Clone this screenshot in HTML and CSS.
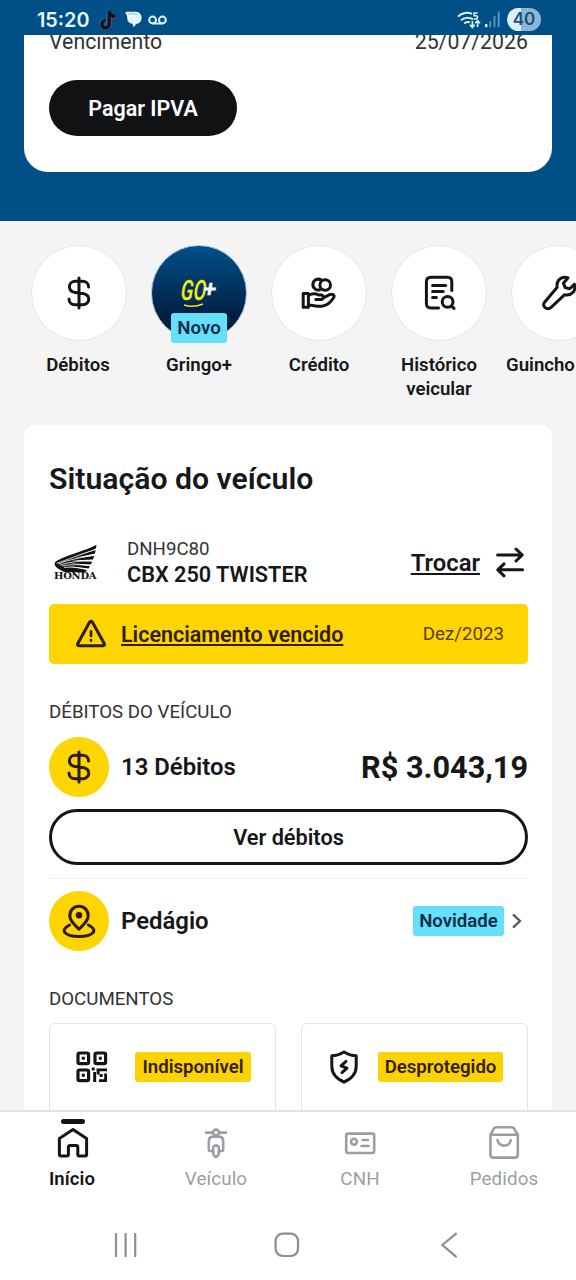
FILE: index.html
```html
<!DOCTYPE html>
<html lang="pt-BR">
<head>
<meta charset="utf-8">
<title>Gringo</title>
<link rel="stylesheet" href="styles.css">
</head>
<body>
<svg class="defs" width="0" height="0">
  <symbol id="dollar" viewBox="0 0 24 34"><path d="M21.6 11C21.6 7.4 19 5.2 15.6 5.2H8.2C5 5.2 2.4 7.6 2.4 10.8C2.4 14 5 16 8.2 16.6L15.8 17.6C19.2 18.2 21.8 20.2 21.8 23.2C21.8 26.4 19 28.8 15.8 28.8H8C4.6 28.8 2 26.6 2 23M12 2V32"/></symbol>
</svg>
<div class="phone">
  <header class="status">
    <div class="status-left">
      <span class="clock">15:20</span>
      <svg class="tiktok" width="18" height="20" viewBox="0 0 18 20"><g fill="none" stroke-width="3.4"><path stroke="#1fb3bd" opacity=".6" d="M9.2 1V13.5A3.6 3.6 0 1 1 5.6 9.8M9.2 1C9.6 4.5 12 6.6 15.6 6.8"/><path stroke="#d62f56" opacity=".7" d="M11 1.6V14.3A3.7 3.7 0 1 1 7 10.4M11 1.6C11.6 5 13.6 7 17 7.2"/><path stroke="#10131f" d="M10.2 1V14A3.7 3.7 0 1 1 6.4 10.2M10.2 1C10.8 4.5 12.8 6.4 16.4 6.6"/></g></svg>
      <svg class="chat" width="17" height="17" viewBox="0 0 17 17"><path fill="#e4f8ff" d="M2 .8H11C14.6 1 16.6 3.6 16.6 7C16.6 10.4 14.4 12.6 11.4 12.8L8.6 16.2L7.4 12.8C4.2 12.4 2.2 10.4 2.2 7C2.2 5 1.6 3.6.4 2.6C.2 1.4 1 .8 2 .8Z"/><path d="M3.4 3.6C6 2.4 9 2.6 11.6 3.4" stroke="#8ab9d8" fill="none"/></svg>
      <svg class="voicemail" width="19" height="10" viewBox="0 0 19 10"><g fill="none" stroke="#dff5ff" stroke-width="2"><circle cx="4.6" cy="5" r="3.4"/><circle cx="14.4" cy="5" r="3.4"/><path d="M4.6 8.5H14.4"/></g></svg>
    </div>
    <div class="status-right">
      <svg class="wifi" width="24" height="18" viewBox="0 0 24 18"><g fill="none" stroke="#d9f3fb" stroke-width="2"><path d="M1 5.6C5 1.6 11 1 15 2.8M4 9.4C7 6.4 12 6 16 8.4M7.2 12.6C9.2 10.8 11 10.6 13 11.4"/><path d="M20.6 2H17.2V4.8H19C21 4.8 21 8 18.8 8H16.8" stroke-width="1.6"/><path d="M15.4 10V16M13 13.8L15.4 16.4L17.6 13.8M20.6 16V10M18.2 12.2L20.6 9.8L23 12.2" stroke-width="1.7"/></g></svg>
      <svg class="signal" width="15" height="17" viewBox="0 0 15 17"><path fill="#d4efff" d="M0 13h2.4v3.2H0z"/><path fill="#5f99c3" d="M4.4 10h1.8v6.2H4.4zM8.6 5h1.8v11.2H8.6zM12.8.6h1.8v15.6h-1.8z"/></svg>
      <span class="battery">40</span>
    </div>
  </header>

  <section class="hero">
    <div class="hero-card">
      <div class="due"><span>Vencimento</span><span>25/07/2026</span></div>
      <button class="pay">Pagar IPVA</button>
    </div>
  </section>

  <nav class="shortcuts">
    <div class="shortcut"><div class="disc"><svg class="line" width="24" height="34"><use href="#dollar"/></svg></div><span class="name deb">Débitos</span></div>
    <div class="shortcut"><div class="disc plus"><div class="go"><i>GO</i><b>+</b><svg width="24" height="6" viewBox="0 0 24 6"><path d="M2 3Q11 6 21 2" fill="none" stroke="#f4e51c" stroke-width="1.5"/></svg></div><span class="new">Novo</span></div><span class="name gri">Gringo+</span></div>
    <div class="shortcut"><div class="disc"><svg class="line" width="36" height="36" viewBox="0 0 36 36"><circle cx="24.2" cy="10" r="5.3"/><path d="M19.2 14.6A5.4 5.4 0 1 1 20.3 5.1"/><path d="M2.2 18.4H7.4V32.2H2.2ZM7.6 20.6C11 18.4 14.4 18.4 17.6 20H20.2C23 20 23 24.4 20 24.6H14.8M22.2 22.8L28.6 19.6C31.8 18.4 34.2 20.4 32.4 23C30 26.8 26.6 30 22 31C17.8 32 13.2 30.4 7.6 30"/></svg></div><span class="name cre">Crédito</span></div>
    <div class="shortcut"><div class="disc"><svg class="line report" width="34" height="36" viewBox="0 0 34 36"><path d="M15.6 33H8C4.8 33 3.4 31.6 3.4 28.6V6.8C3.4 3.6 4.8 2.2 8 2.2H24.4C27.4 2.2 28.8 3.6 28.8 6.8V15.4M9.6 10.4H22.8M9.6 16.4H20.2M9.6 22.4H13.4"/><circle cx="24.6" cy="26.8" r="5.4"/><path d="M28.6 31L31 33.4"/></svg></div><span class="name his">Histórico<br>veicular</span></div>
    <div class="shortcut"><div class="disc"><svg class="line" width="36" height="36" viewBox="0 0 36 36"><path d="M16.2 12.2C14.8 5.4 20.6 .6 27 2.8L22.4 8.2L24.2 12.6L28.8 13.8L33.4 9.2C35.6 15.8 30.2 21.4 23.4 19.8L9.6 32.8C5.4 35.6 .8 31 3.6 27.2Z"/></svg></div><span class="name gui">Guincho</span></div>
  </nav>

  <main class="panel">
    <h1>Situação do veículo</h1>
    <div class="vehicle">
      <div class="honda">
        <svg width="43" height="29" viewBox="0 0 43 29"><path fill="#111" d="M42.5.8C35 5 24 8 11.5 12.8C4.5 15.6.6 17.6.6 20C.8 23 5 25.4 11 28.2H31L33 26L14 22L34.5 24.6L36 22.2L15 19.2L36.6 20.6L38.4 17.8L17 16.4L39 15.6L40.2 12L20 14L41 9.6L41.6 6L23 11.4C30 8.4 37 7.6 42 4.2Z"/><g fill="none" stroke="#fff" stroke-width=".8"><path d="M2.6 19.4C12 16 28 10 41.6 5.4M4.4 20C14 15.6 27 14 40.6 10.8M6 21C15 17.8 27 17 38.8 16.4M8 22C18 19.8 27 21 36.6 21.4M10 23.4C18 22.4 27 24.2 34.4 25.4"/></g></svg>
        <span>HONDA</span>
      </div>
      <div class="model"><span class="plate">DNH9C80</span><strong>CBX 250 TWISTER</strong></div>
      <a class="swap">Trocar</a>
      <svg class="line arrows" width="30" height="32" viewBox="0 0 30 32"><path d="M2.6 9H27M21 3L27.2 9L21 15M27.6 23.8H2.8M9 17.8L2.8 23.8L9 29.8"/></svg>
    </div>
    <div class="alert">
      <svg class="line" width="32" height="30" viewBox="0 0 32 30"><path d="M14.4 3.4Q16 1 17.6 3.4L29.2 24.4Q30.2 26.6 27.8 26.8H4.2Q1.8 26.6 2.8 24.4Z"/><path d="M16 12.4V17M16 21V21.6" stroke-width="2.7"/></svg>
      <a>Licenciamento vencido</a><span>Dez/2023</span>
    </div>
    <h2 class="cap-debts">DÉBITOS DO VEÍCULO</h2>
    <div class="row">
      <span class="dot"><svg class="line" width="24" height="34"><use href="#dollar"/></svg></span>
      <strong class="count">13 Débitos</strong><strong class="total">R$ 3.043,19</strong>
    </div>
    <button class="see"><span>Ver débitos</span></button>
    <div class="row toll">
      <span class="dot"><svg class="line" width="36" height="36" viewBox="0 0 36 36"><path d="M18 26.2C13.4 21.4 8.8 18 8.8 12.4A9.2 9.2 0 0 1 27.2 12.4C27.2 18 22.6 21.4 18 26.2ZM8.6 22C-2.4 27.4 4.6 33.6 18 33.6C31.4 33.6 38.4 27.4 27.4 22"/><circle cx="18" cy="12.2" r="1.8" fill="#2c1d10"/></svg></span>
      <strong class="toll-name">Pedágio</strong>
      <span class="tag blue">Novidade</span>
      <svg class="chev" width="12" height="18" viewBox="0 0 12 18"><path d="M2 2.4L9 9L2 15.6"/></svg>
    </div>
    <h2 class="cap-docs">DOCUMENTOS</h2>
    <div class="docs">
      <div class="doc">
        <svg class="line" width="32" height="32" viewBox="0 0 32 32"><g stroke-width="3.2"><rect x="2" y="2" width="10.6" height="10.6" rx="1.6"/><rect x="19" y="2" width="10.6" height="10.6" rx="1.6"/><rect x="2" y="19" width="10.6" height="10.6" rx="1.6"/></g><path stroke="none" fill="#111" d="M5.8 5.8h3v3h-3zM22.8 5.8h3v3h-3zM5.8 22.8h3v3h-3zM15.8 16.6h2.8v3h-2.8zM17.2 21h3v10h-3zM20.4 17.4H31v2.8h-7.4v3.4h-2.6zM23.6 23h3v3h-3zM28.2 22.6H31V31h-8v-2.8h5.2z"/></svg>
        <span class="tag yellow ind">Indisponível</span>
      </div>
      <div class="doc">
        <svg class="line shield" width="32" height="36" viewBox="0 0 32 36"><path d="M16 3C12 5.4 8 6.8 3.8 6.8V17C3.8 24.6 8.4 29.8 16 33C23.6 29.8 28.2 24.6 28.2 17V6.8C24 6.8 20 5.4 16 3Z"/><path d="M18 12.4L13 16.8L19 19.2L14 23.6"/></svg>
        <span class="tag yellow des">Desprotegido</span>
      </div>
    </div>
  </main>

  <footer class="bottom">
    <div class="tabs">
      <div class="tab on"><i class="mark"></i><svg width="34" height="32" viewBox="0 0 34 32"><path d="M17 2.4L30.6 11.4V27.6Q30.6 29 29.2 29H23.2Q21.8 29 21.8 27.6V20.4Q21.8 18.6 20 18.6H14.4Q12.4 18.6 12.4 20.4V27.6Q12.4 29 11 29H4.8Q3.4 29 3.4 27.6V11.4Z"/></svg><span class="ini">Início</span></div>
      <div class="tab"><svg width="24" height="32" viewBox="0 0 24 32"><circle cx="12" cy="5.6" r="3"/><path d="M2 5.6H8.8M15.2 5.6H22M7.4 24H6Q4.8 24 4.8 22.6V14.4Q4.8 9.6 9 9.6H15Q19.2 9.6 19.2 14.4V22.6Q19.2 24 18 24H16.6"/><path d="M9.2 20Q12 16.8 14.8 20V27Q12 32.8 9.2 27Z"/></svg><span class="vei">Veículo</span></div>
      <div class="tab"><svg width="32" height="32" viewBox="0 0 32 32"><rect x="2.2" y="6.6" width="28" height="19.4" rx="2"/><circle cx="10" cy="14.8" r="3"/><path d="M18.6 13H24M17.6 19H24.6"/></svg><span class="cnh">CNH</span></div>
      <div class="tab"><svg width="34" height="36" viewBox="0 0 34 36"><path d="M3.4 9.8L7 3.4Q7.6 2.2 9 2.2H25Q26.4 2.2 27 3.4L30.8 9.8V29.4Q30.8 32.6 27.6 32.6H6.6Q3.4 32.6 3.4 29.4ZM3.4 9.8H30.8M10.4 15.2C12.4 22.4 22 22.4 23.8 15.2"/></svg><span class="ped">Pedidos</span></div>
    </div>
    <div class="system">
      <svg width="24" height="24" viewBox="0 0 24 24"><path d="M2 1V23M11.6 1V23M21.2 1V23"/></svg>
      <svg width="26" height="26" viewBox="0 0 26 26"><rect x="1.6" y="1.6" width="22.4" height="22.4" rx="7.2"/></svg>
      <svg width="18" height="26" viewBox="0 0 18 26"><path d="M16 1.6L2.4 13L16 24.6"/></svg>
    </div>
  </footer>
</div>
</body>
</html>
```
FILE: styles.css
```css
* { box-sizing: border-box; }
body { margin: 0; font-family: Roboto, "Liberation Sans", sans-serif; color: #161719; background: #f4f4f4; }
.phone { width: 576px; height: 1280px; display: flex; flex-direction: column; overflow: hidden; }
.defs { position: absolute; }
svg { display: block; flex: none; }
button { font: inherit; display: block; border: 0; }
.line { fill: none; stroke: #151515; stroke-width: 3; stroke-linecap: round; stroke-linejoin: round; }

.status { flex: none; height: 35px; padding: 4px 35px 0 37px; background: #004f87; display: flex; justify-content: space-between; }
.status-left, .status-right { display: flex; align-items: center; height: 31px; }
.clock { width: 62px; font: 600 19.8px Inter, sans-serif; color: #e4f8ff; }
.chat { margin-left: 8px; }
.voicemail { margin-left: 6px; }
.signal { margin-left: 4px; }
.battery { margin-left: 7px; width: 34px; height: 23px; border-radius: 12px; background: linear-gradient(90deg, #daf1fc 40%, #8ab7d7 40%); color: #174f7c; font: 600 17px/23px Inter, sans-serif; text-align: center; }

.hero { flex: none; height: 186px; background: #004f87; padding: 0 24px; overflow: hidden; }
.hero-card { height: 137px; padding: 0 24px 0 25px; background: #fff; border-radius: 0 0 24px 24px; overflow: hidden; }
.due { display: flex; justify-content: space-between; height: 45px; font-size: 21.3px; line-height: 24px; color: #333; }
.due span { margin-top: -5px; }
.pay { width: 188px; height: 56px; border-radius: 28px; background: #111214; color: #fff; font-size: 21.5px; font-weight: 600; padding: 0; }

.shortcuts { flex: none; display: flex; height: 204px; margin-left: 19px; padding-top: 24px; }
.shortcut { flex: none; width: 120px; display: flex; flex-direction: column; align-items: center; text-align: center; }
.disc { flex: none; width: 96px; height: 96px; border: 1.5px solid #e6e6e6; border-radius: 50%; background: #fff; display: flex; align-items: center; justify-content: center; position: relative; }
.report { margin-left: 2px; }
.plus { background: linear-gradient(#00508b, #001f40 75%); border-color: #a7c6dc; }
.go { display: flex; position: relative; left: 0; top: -2px; line-height: 30px; }
.go i { font: italic 600 28px/30px Roboto, sans-serif; color: #f4e51c; transform: scaleX(.68) skewX(-6deg); transform-origin: left; width: 23px; }
.go b { font-size: 24px; line-height: 26px; color: #eefaff; margin-left: -1px; transform: skewX(-10deg); }
.go svg { position: absolute; left: 1px; top: 26px; }
.new { position: absolute; left: 19px; top: 67px; width: 56px; height: 30px; border-radius: 3px; background: #66dffa; color: #072d4b; font-size: 18.7px; font-weight: 600; line-height: 30px; }
.name { margin-top: 12px; font-size: 18.6px; font-weight: 600; line-height: 24px; }
.deb { margin-left: -2px; }
.gui { align-self: flex-start; margin-left: 7px; }

.panel { flex: none; height: 686px; margin: 0 24px; padding: 34px 24px 0 25px; background: #fff; border-radius: 12px 12px 0 0; overflow: hidden; }
h1 { margin: 0; font-size: 30.2px; line-height: 40px; font-weight: 600; }
.vehicle { height: 60px; margin-top: 33px; display: flex; align-items: center; }
.honda { width: 78px; padding-left: 5px; }
.honda span { display: block; width: 43px; font: 700 8.5px/8px "DejaVu Serif", serif; transform: scaleX(1.17); transform-origin: left; margin-top: -1px; color: #111; letter-spacing: -.2px; }
.model { display: flex; flex-direction: column; flex: 1; }
.plate { font-size: 18.7px; line-height: 26px; color: #333; }
.model strong { font-size: 21.7px; line-height: 26px; font-weight: 600; }
.swap { font-size: 23.8px; line-height: 28px; font-weight: 600; margin: 2px 15px 0 0; }
.arrows { margin-right: 3px; }
.swap, .alert a { text-decoration: underline; text-decoration-thickness: 1.5px; text-underline-offset: 2px; text-decoration-skip-ink: none; }
.alert { height: 60px; margin-top: 12px; padding: 0 24px 0 26px; border-radius: 5px; background: #ffd500; display: flex; align-items: center; color: #301d05; }
.alert a { margin-left: 14px; flex: 1; font-size: 21.5px; font-weight: 600; }
.alert span { font-size: 18.7px; color: #5b3d07; }
.alert .line, .dot .line { stroke: #2c1d10; }
h2 { margin: 0; font-size: 18.7px; font-weight: 400; line-height: 24px; color: #333; }
.cap-debts { margin: 36px 0 13px; }
.row { display: flex; align-items: center; height: 60px; }
.dot { width: 60px; height: 60px; border-radius: 50%; background: #ffd500; display: flex; align-items: center; justify-content: center; margin-right: 12px; }
.row strong { font-weight: 600; font-size: 23.9px; }
.row .count { flex: 1; }
.row .total { font-weight: 700; font-size: 30.7px; }
.see { width: 479px; height: 56px; margin-top: 12px; padding: 0; border: 3px solid #151515; border-radius: 28px; background: #fff; color: #161719; font-size: 21.7px; font-weight: 600; }
.toll { height: 73px; margin-top: 13px; padding-top: 12px; border-top: 1.5px solid #eee; }
.row .toll-name { flex: 1; }
.tag { height: 30px; line-height: 30px; border-radius: 3px; font-size: 18.6px; font-weight: 600; text-align: center; white-space: nowrap; }
.blue { width: 91px; background: #66dffa; color: #072d4b; }
.chev { margin: 0 5px 0 7px; fill: none; stroke: #555; stroke-width: 2.2; }
.cap-docs { margin: 36px 0 12px; }
.docs { display: grid; grid-template-columns: 227px 227px; gap: 25px; }
.doc { height: 120px; border: 1.5px solid #e4e4e4; border-radius: 6px; display: flex; align-items: center; padding: 0 24px 32px 26px; justify-content: space-between; }
.yellow { background: #fbd202; color: #351d08; }
.ind { width: 116px; }
.des { width: 125px; }
.shield { margin-top: -1px; }

.bottom { flex: none; height: 170px; margin-top: -1px; border-top: 2px solid #e1e1e1; background: #fff; position: relative; }
.tabs { display: flex; height: 86px; }
.tab { width: 144px; position: relative; display: flex; flex-direction: column; align-items: center; font-size: 18.8px; letter-spacing: .1px; color: #9b9fa3; }
.tab svg { height: 36px; margin-top: 13px; fill: none; stroke: #9b9fa3; stroke-width: 2.6; stroke-linejoin: round; stroke-linecap: round; }
.tab span { line-height: 24px; margin-top: 6px; }
.tab.on { color: #151515; font-weight: 600; font-size: 18.5px; }
.on svg { stroke: #151515; stroke-width: 3; margin-left: 1px; }
.mark { position: absolute; left: 61px; top: 7px; width: 24px; height: 5px; border-radius: 3px; background: #151515; }
.system { display: flex; align-items: center; height: 26px; margin-top: 34px; padding-left: 114px; }
.system svg { fill: none; stroke: #8e8e8e; stroke-width: 2.2; stroke-linecap: round; }
.system svg:nth-child(2) { margin-left: 136px; }
.system svg:nth-child(3) { margin-left: 140px; }
```
